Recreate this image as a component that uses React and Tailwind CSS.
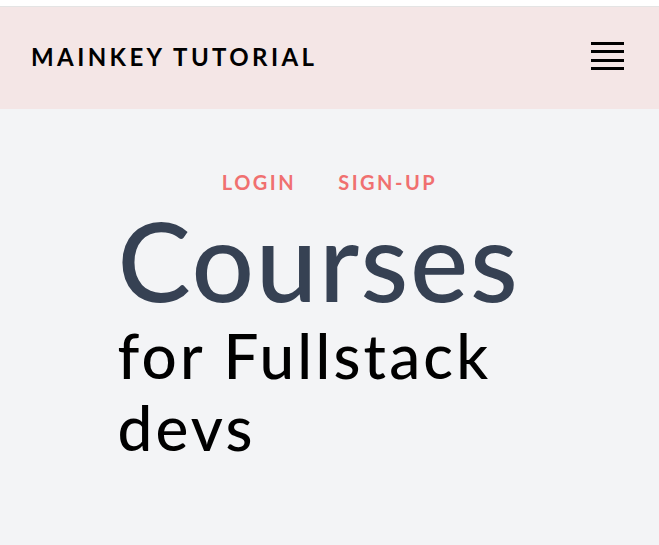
import React from 'react';

export default function App() {
  return (
    <div className="min-h-[545px] bg-gray-100 font-['Lato',sans-serif]">
      {/* top strip */}
      <div className="h-[7px] bg-white border-b border-[#e4e4e4]" />

      {/* Header */}
      <header className="h-[102px] bg-[#f4e6e6] flex items-center justify-between pl-[31px] pr-[35px]">
        <h1 className="text-[24px] font-bold text-black tracking-[3.4px] pb-[2px]">MAINKEY TUTORIAL</h1>
        <button aria-label="menu" className="w-[33px] flex flex-col gap-[5.5px] pb-[4px]">
          <span className="block h-[3px] bg-black" />
          <span className="block h-[3px] bg-black" />
          <span className="block h-[3px] bg-black" />
          <span className="block h-[3px] bg-black" />
        </button>
      </header>

      {/* Nav links */}
      <nav className="flex justify-center gap-[42px] pt-[58px] text-[20px] font-bold tracking-[2.5px] text-[#f07070]">
        <a href="#">LOGIN</a>
        <a href="#">SIGN-UP</a>
      </nav>

      {/* Hero */}
      <div className="w-[430px] mx-auto pl-[3px]">
        <h2 className="text-[110px] leading-[110px] tracking-[1.7px] text-gray-700 font-medium mt-[7px] mb-[5px]">Courses</h2>
        <p className="text-[62px] leading-[72px] tracking-[3.2px] text-black font-medium">for Fullstack devs</p>
      </div>
    </div>
  );
}
